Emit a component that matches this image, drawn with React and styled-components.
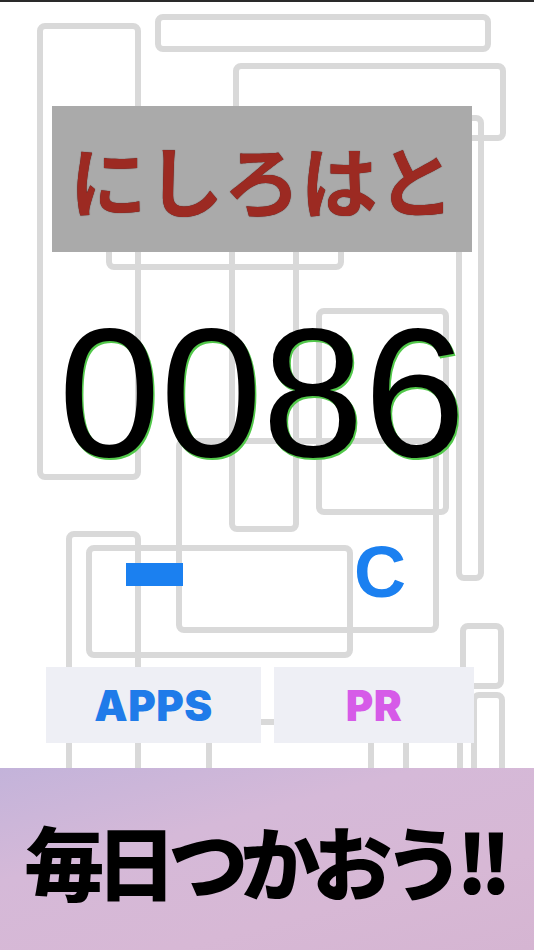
import React from 'react';
import styled, { createGlobalStyle } from 'styled-components';

const GlobalStyle = createGlobalStyle`
  html, body {
    margin: 0;
    padding: 0;
    background: #ffffff;
  }
  body {
    font-family: "Liberation Sans", Arial, sans-serif;
  }
`;

// outer bounds of the grey maze frames: x, y, w, h
const frames = [
    [37, 23, 104, 457],
    [155, 14, 336, 38],
    [233, 63, 273, 78],
    [106, 190, 238, 80],
    [229, 190, 70, 342],
    [456, 115, 28, 466],
    [316, 308, 133, 207],
    [176, 438, 263, 195],
    [66, 531, 75, 260],
    [86, 545, 267, 113],
    [460, 623, 44, 66],
    [471, 692, 34, 100],
    [206, 719, 168, 80],
    [403, 730, 60, 70],
];

const Maze = () => (
    <MazeLayer viewBox="0 2 534 766" width="534" height="766">
        {frames.map(([x, y, w, h], i) => (
            <rect key={i} x={x + 3} y={y + 3} width={w - 6} height={h - 6}
                rx="5" fill="none" stroke="#d9d9d9" strokeWidth="6" />
        ))}
    </MazeLayer>
);

const App = () => {
    return (
        <Page>
            <GlobalStyle />
            <Main>
                <Maze />
                <Content>
                    <TitleBox>にしろはと</TitleBox>
                    <Counter>0086</Counter>
                    <KeyRow>
                        <Key><MinusBar /></Key>
                        <Key>C</Key>
                    </KeyRow>
                    <NavRow>
                        <NavButton $w={215} $color="#1f7be9">APPS</NavButton>
                        <NavButton $w={200} $color="#d65be8">PR</NavButton>
                    </NavRow>
                </Content>
            </Main>
            <Banner>毎日つかおう!!</Banner>
        </Page>
    );
};

const Page = styled.div`
    width: 534px;
    height: 950px;
    border-top: 2px solid #2a2a2a;
    box-sizing: border-box;
    display: flex;
    flex-direction: column;
    overflow: hidden;
    background: #fff;
`;
const Main = styled.div`
    height: 766px;
    display: grid;
    & > * {
        grid-area: 1 / 1;
    }
`;
const MazeLayer = styled.svg`
    display: block;
`;
const Content = styled.div`
    display: flex;
    flex-direction: column;
    padding-top: 104px;
`;
const TitleBox = styled.div`
    margin-left: 52px;
    width: 420px;
    height: 146px;
    background: #aaaaaa;
    display: flex;
    align-items: center;
    justify-content: center;
    font-family: "Noto Sans CJK JP", sans-serif;
    font-weight: 700;
    font-size: 77px;
    color: #9c2a22;
    text-shadow: 0 0 1px #3a1210;
    padding-bottom: 2px;
    box-sizing: border-box;
`;
const Counter = styled.div`
    margin-top: 50px;
    height: 182px;
    line-height: 182px;
    font-size: 183px;
    font-family: "Liberation Sans", Arial, sans-serif;
    color: #000;
    text-align: center;
    margin-right: 10px;
    text-shadow: 1.5px 1.5px 0 #52c84a;
`;
const KeyRow = styled.div`
    margin-top: 52px;
    padding-left: 41px;
    display: grid;
    grid-template-columns: 226px 226px;
    height: 72px;
`;
const Key = styled.div`
    display: flex;
    align-items: center;
    justify-content: center;
    font-family: "Liberation Sans", Arial, sans-serif;
    font-weight: 700;
    font-size: 72px;
    line-height: 72px;
    color: #1b80f0;
`;
const MinusBar = styled.span`
    display: block;
    width: 57px;
    height: 23px;
    margin-top: 5px;
    background: #1b80f0;
`;
const NavRow = styled.div`
    margin-top: 59px;
    padding-left: 46px;
    display: flex;
    gap: 13px;
`;
const NavButton = styled.div`
    width: ${p => p.$w}px;
    height: 76px;
    background: #eeeff5;
    display: flex;
    align-items: center;
    justify-content: center;
    font-family: Inter, "Liberation Sans", sans-serif;
    font-weight: 900;
    font-size: 42px;
    letter-spacing: 0.5px;
    color: ${p => p.$color};
`;
const Banner = styled.div`
    height: 182px;
    background: linear-gradient(165deg, #c3b3da 0%, #d5b9d8 35%, #d7b8d5 70%, #d5b5d2 100%);
    display: flex;
    align-items: center;
    justify-content: center;
    font-family: "Noto Sans CJK JP", sans-serif;
    font-weight: 800;
    font-size: 80px;
    letter-spacing: -8px;
    color: #000;
    padding-right: 6px;
`;

export default App;
